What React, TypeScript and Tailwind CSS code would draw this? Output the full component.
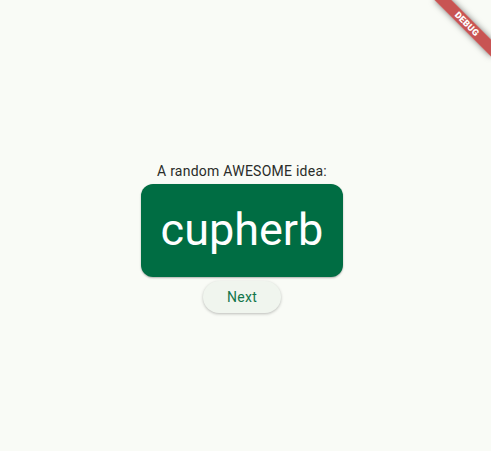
import React from "react";

export default function App() {
  return (
    <div
      className="relative w-[491px] h-[451px] overflow-hidden bg-[#f9fbf6] flex flex-col items-center pt-[161px] pr-[7px]"
      style={{ fontFamily: "Roboto, 'Noto Sans', sans-serif" }}
    >
      <div className="text-[14px] leading-[20px] text-[#2a2c29] tracking-[0.25px]">A random AWESOME idea:</div>
      <div className="mt-[3px] rounded-[12px] bg-[#006d43] px-5 pt-5 pb-[21px] shadow-[0_1px_2px_rgba(0,0,0,0.3)]">
        <div className="text-[45px] leading-[52px] text-white">cupherb</div>
      </div>
      <button className="mt-[4px] h-[32px] px-6 rounded-full bg-[#f0f5ee] text-[#12754b] text-[14px] font-normal tracking-[0.3px] shadow-[0_1px_3px_rgba(0,0,0,0.25)]">
        Next
      </button>
      <div
        className="absolute left-[427px] top-[18px] w-[80px] h-[12px] bg-[#b71c1c]/75 rotate-45 flex items-center justify-center shadow-[0_0_6px_rgba(0,0,0,0.5)]"
      >
        <span className="text-[9px] leading-[9px] font-black text-white tracking-[0.3px]">DEBUG</span>
      </div>
    </div>
  );
}
